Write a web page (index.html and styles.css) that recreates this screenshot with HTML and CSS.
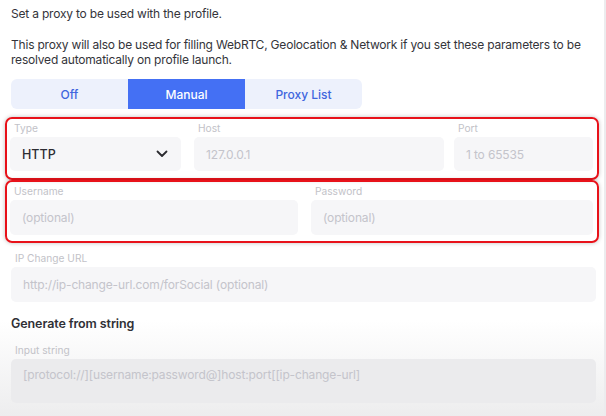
FILE: index.html
```html
<!DOCTYPE html>
<html>
<head>
<meta charset="utf-8">
<link rel="stylesheet" href="styles.css">
</head>
<body>
<div class="page">
  <p class="intro">Set a proxy to be used with the profile.</p>
  <p class="desc">This proxy will also be used for filling WebRTC, Geolocation &amp; Network if you set these parameters to be resolved automatically on profile launch.</p>
  <div class="seg">
    <div class="seg-item">Off</div>
    <div class="seg-item active">Manual</div>
    <div class="seg-item">Proxy List</div>
  </div>
  <div class="group g1">
    <div class="field f-type">
      <div class="label">Type</div>
      <div class="input select"><span class="val">HTTP</span>
        <svg class="chev" width="12" height="8" viewBox="0 0 12 8"><path d="M1.5 1.5 L6 6 L10.5 1.5" fill="none" stroke="#2b2b30" stroke-width="1.8" stroke-linecap="round" stroke-linejoin="round"/></svg>
      </div>
    </div>
    <div class="field f-host">
      <div class="label">Host</div>
      <div class="input"><span class="ph">127.0.0.1</span></div>
    </div>
    <div class="field f-port">
      <div class="label">Port</div>
      <div class="input"><span class="ph">1 to 65535</span></div>
    </div>
  </div>
  <div class="group g2">
    <div class="field f-user">
      <div class="label">Username</div>
      <div class="input"><span class="ph">(optional)</span></div>
    </div>
    <div class="field f-pass">
      <div class="label">Password</div>
      <div class="input"><span class="ph">(optional)</span></div>
    </div>
  </div>
  <div class="field f-ip">
    <div class="label">IP Change URL</div>
    <div class="input wide"><span class="ph">http://ip-change-url.com/forSocial (optional)</span></div>
  </div>
  <h3 class="heading">Generate from string</h3>
  <div class="field f-str">
    <div class="label">Input string</div>
    <div class="input tall"><span class="ph">[protocol://][username:password@]host:port[[ip-change-url]</span></div>
  </div>
</div>
</body>
</html>
```
FILE: styles.css
```css
html, body {
  margin: 0;
  padding: 0;
}
body {
  width: 606px;
  height: 416px;
  overflow: hidden;
  font-family: Inter, "Noto Sans", sans-serif;
  color: #34343a;
  background: linear-gradient(to bottom, #ffffff 0, #ffffff 320px, #ededee 416px);
  border-right: 2px solid #ececee;
  box-sizing: border-box;
}
.page {
  padding: 0 8px 0 11px;
}
p {
  margin: 0;
  font-size: 12px;
  line-height: 15px;
  letter-spacing: -0.2px;
}
.intro {
  padding-top: 6px;
}
.desc {
  margin-top: 16px;
}
.seg {
  margin-top: 12px;
  display: flex;
  width: 351px;
  height: 30px;
  background: #edf1fc;
  border-radius: 6px;
  overflow: hidden;
}
.seg-item {
  flex: 1;
  display: flex;
  align-items: center;
  justify-content: center;
  font-size: 12px;
  font-weight: 500;
  color: #3f66de;
}
.seg-item.active {
  background: #4470f4;
  color: #fff;
}
.group {
  margin-left: -6px;
  margin-right: -3px;
  border: 2px solid #e8121a;
  border-radius: 7px;
  box-shadow: 0 0 4px rgba(0,0,0,0.25);
  display: flex;
  padding: 3px 4px 6px 3px;
  height: 63px;
  box-sizing: border-box;
}
.g1 { margin-top: 8px; }
.g2 { margin-top: 0; }
.label {
  font-size: 10.2px;
  line-height: 13px;
  color: #c2c2c8;
  padding-left: 4px;
  height: 14px;
}
.input {
  margin-top: 1px;
  height: 34px;
  background: #f6f6f8;
  border-radius: 5px;
  display: flex;
  align-items: center;
  padding: 0 13px 0 12px;
  box-sizing: border-box;
  font-size: 12px;
  letter-spacing: -0.15px;
}
.ph { color: #c4c4cb; }
.val { color: #2c2c32; font-weight: 500; font-size: 12.5px; letter-spacing: 0; }
.select { justify-content: space-between; }
.chev { margin-right: 0; }
.f-type { width: 171px; }
.f-host { width: 250px; margin-left: 13px; }
.f-port { flex: 1; margin-left: 10px; }
.g2 .input { height: 35px; }
.f-user { width: 288px; }
.f-pass { flex: 1; margin-left: 13px; }
.f-ip { margin-top: 9px; }
.wide { height: 35px; }
.heading {
  margin: 14px 0 0;
  font-size: 12.5px;
  line-height: 16px;
  font-weight: 600;
  letter-spacing: -0.1px;
  color: #303036;
}
.f-str { margin-top: 12px; }
.tall {
  height: 44px;
  align-items: flex-start;
  padding-top: 8px;
  background: #ebebed;
}
```
